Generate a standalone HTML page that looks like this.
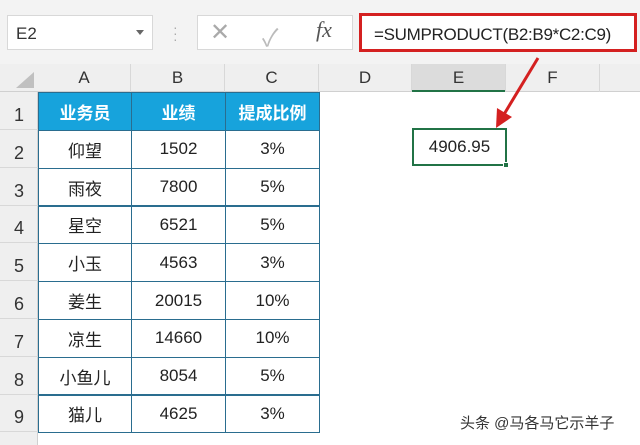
<!DOCTYPE html>
<html><head><meta charset="utf-8"><style>
body{margin:0;width:640px;height:445px;background:#fff;position:relative;overflow:hidden;font-family:"Liberation Sans","Noto Sans CJK SC",sans-serif}
.a{position:absolute;box-sizing:border-box}
.cell{position:absolute;box-sizing:border-box;display:flex;align-items:center;justify-content:center;font-size:17px;color:#222}
</style></head><body>
<div class="a" style="left:0;top:0;width:640px;height:64px;background:#f3f3f3"></div>
<div class="a" style="left:7px;top:15px;width:146px;height:35px;background:#fff;border:1px solid #d8d8d8;font-size:17px;padding:8px 8px;color:#333">E2</div>
<div class="a" style="left:136px;top:30px;border-left:4px solid transparent;border-right:4px solid transparent;border-top:5px solid #666"></div>
<div class="a" style="left:173px;top:24px;color:#aaa;font-size:14px;line-height:6px">·<br>·<br>·</div>
<div class="a" style="left:197px;top:15px;width:156px;height:35px;background:#fff;border:1px solid #d8d8d8"></div>
<div class="a" style="left:210px;top:18px;font-size:24px;color:#aaa">✕</div>
<div class="a" style="left:262px;top:18px;font-size:24px;color:#bbb">✓</div>
<div class="a" style="left:316px;top:17px;font-size:22px;color:#555;font-style:italic;font-family:'Liberation Serif',serif">fx</div>
<div class="a" style="left:359px;top:13px;width:278px;height:39px;background:#fff;border:3px solid #d42020;font-size:17px;padding:9px 0 0 12px;color:#222;letter-spacing:-0.3px">=SUMPRODUCT(B2:B9*C2:C9)</div>
<div class="a" style="left:0;top:64px;width:640px;height:28px;background:#efefef;border-bottom:1px solid #d0d0d0"></div>
<div class="a" style="left:0;top:92px;width:38px;height:353px;background:#efefef;border-right:1px solid #d0d0d0"></div>
<div class="a" style="left:16px;top:72px;border-left:18px solid transparent;border-bottom:16px solid #c0c0c0"></div>
<div class="a" style="left:412px;top:64px;width:94px;height:28px;background:#dcdcdc;border-bottom:2px solid #217346"></div>
<div id="g"></div>
<div class="cell" style="left:412px;top:128px;width:95px;height:38px;border:2px solid #217346">4906.95</div>
<div class="a" style="left:503px;top:162px;width:6px;height:6px;background:#217346;border:1px solid #fff"></div>
<svg class="a" style="left:0;top:0" width="640" height="445"><line x1="538" y1="58" x2="503" y2="116" stroke="#d42020" stroke-width="3"/><polygon points="496,128 497,108 512,117" fill="#d42020"/></svg>
<div class="a" style="left:460px;top:412px;font-size:15px;color:#333">头条 @马各马它示羊子</div>
<script>
var g=document.getElementById('g'),h='';
var cols=['A','B','C','D','E','F'],cx=[38,131,225,319,412,506,600];
for(var i=0;i<6;i++){h+='<div class="cell" style="left:'+cx[i]+'px;top:64px;width:'+(cx[i+1]-cx[i])+'px;height:28px;color:#333;border-right:1px solid #d8d8d8">'+cols[i]+'</div>';}
var d=[['业务员','业绩','提成比例'],['仰望','1502','3%'],['雨夜','7800','5%'],['星空','6521','5%'],['小玉','4563','3%'],['姜生','20015','10%'],['凉生','14660','10%'],['小鱼儿','8054','5%'],['猫儿','4625','3%']];
for(var r=0;r<9;r++){var y=92+r*37.8;
h+='<div class="cell" style="left:0;top:'+y+'px;width:38px;height:38px;align-items:flex-end;padding-bottom:3px;color:#333;font-size:18px;border-bottom:1px solid #d8d8d8">'+(r+1)+'</div>';
for(var c=0;c<3;c++){var s=r==0?'background:#17a3dc;color:#fff;font-weight:bold;':'';
h+='<div class="cell" style="left:'+cx[c]+'px;top:'+y+'px;width:'+(cx[c+1]-cx[c]+1)+'px;height:39px;border:1px solid #2a6d8f;'+s+'">'+d[r][c]+'</div>';}}
g.innerHTML=h;
</script>
</body></html>
